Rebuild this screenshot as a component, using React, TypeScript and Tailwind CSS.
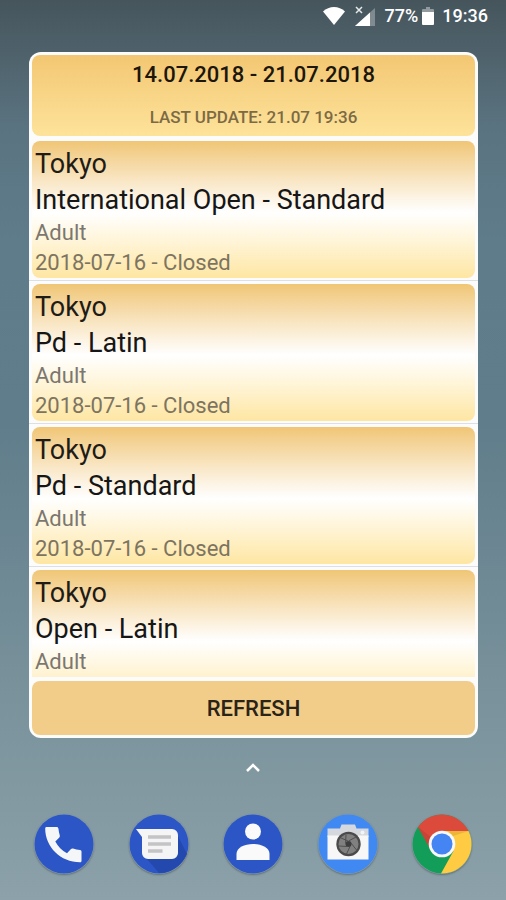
import React from 'react';

interface Competition {
  city: string;
  title: string;
  age: string;
  status: string;
}

const competitions: Competition[] = [
  { city: 'Tokyo', title: 'International Open - Standard', age: 'Adult', status: '2018-07-16 - Closed' },
  { city: 'Tokyo', title: 'Pd - Latin', age: 'Adult', status: '2018-07-16 - Closed' },
  { city: 'Tokyo', title: 'Pd - Standard', age: 'Adult', status: '2018-07-16 - Closed' },
  { city: 'Tokyo', title: 'Open - Latin', age: 'Adult', status: '2018-07-16 - Closed' },
];

const StatusBar: React.FC = () => (
  <header className="flex h-8 shrink-0 items-center justify-end pr-[18px] text-[18px] leading-8 font-medium text-white">
    {/* Wifi */}
    <svg width="22" height="18" viewBox="0 0 22 18" className="mr-[10px]">
      <path d="M11 18 0 4.500C3 1.500 7 0 11 0s8 1.500 11 4.500z" fill="#fff" />
    </svg>
    {/* Mobile signal, no data */}
    <svg width="20" height="21" viewBox="0 0 20 21" className="mr-[10px]">
      <path d="M20 2v18H0z" fill="#fff" opacity="0.3" />
      <path d="M15 6.500V20H0z" fill="#fff" />
      <path d="m1 1 6 6M7 1 1 7" stroke="#e4eaec" strokeWidth="1.500" />
    </svg>
    <span>77%</span>
    {/* Battery */}
    <svg width="12" height="18" viewBox="0 0 12 18" className="mr-2 ml-1">
      <path d="M4 0h4v2h3a1 1 0 0 1 1 1v3H0V3a1 1 0 0 1 1-1h3z" fill="#fff" opacity="0.4" />
      <path d="M0 5h12v12a1 1 0 0 1-1 1H1a1 1 0 0 1-1-1z" fill="#fff" />
    </svg>
    <span>19:36</span>
  </header>
);

const CompetitionItem: React.FC<{ item: Competition }> = ({ item }) => (
  <li className="border-b border-[#dcdfe4] px-[3px] pb-[2px]">
    <div className="rounded-lg bg-linear-to-b from-[#f0c675] via-white via-52% to-[#fee6a2] px-[3px] pt-[5px]">
      <h2 className="text-[27px] leading-9 text-[#1f1b16]">{item.city}</h2>
      <p className="text-[27px] leading-9 text-[#161616]">{item.title}</p>
      <p className="text-[22px] leading-[30px] text-[#7b776f]">{item.age}</p>
      <p className="text-[22px] leading-[30px] text-[#7d7460]">{item.status}</p>
    </div>
  </li>
);

const PhoneIcon: React.FC = () => (
  <svg width="60" height="60" viewBox="0 0 60 60">
    <circle cx="30" cy="30" r="29.500" fill="#2c56c6" />
    <path
      d="M12.500 13h10.200c.9 0 1.500.6 1.700 1.500.3 2.500.7 4.800 1.400 7 .2.800 0 1.400-.5 2l-4 4c2.600 5 6.600 9 11.700 11.700l4-4.100c.5-.5 1.200-.7 2-.5 2.200.7 4.600 1.200 7 1.400.9.100 1.500.7 1.500 1.600V47c0 .9-.7 1.300-1.500 1.300C26.600 48.300 11.200 33 11.200 14.500c0-.9.500-1.500 1.300-1.500z"
      fill="#f5f6f8"
    />
  </svg>
);

const MessagesIcon: React.FC = () => (
  <svg width="60" height="60" viewBox="0 0 60 60">
    <circle cx="30" cy="30" r="29.500" fill="#2c56c6" />
    <path d="M17 44l13 15c11 0 23-7 28-19L47 18z" fill="#2449ae" />
    <path d="M7 15h36a6 6 0 0 1 6 6v18a6 6 0 0 1-6 6H19a6 6 0 0 1-6-6V23z" fill="#f5f5f6" />
    <path d="M19 23h23M19 30h23M19 37h14.500" stroke="#c4c4c6" strokeWidth="3.500" />
  </svg>
);

const ContactsIcon: React.FC = () => (
  <svg width="60" height="60" viewBox="0 0 60 60">
    <circle cx="30" cy="30" r="29.500" fill="#2c56c6" />
    <circle cx="30" cy="17.500" r="8" fill="#fafafa" />
    <path d="M13.500 46V40c0-6.500 8-10 16.500-10s16.500 3.500 16.500 10v6z" fill="#fafafa" />
  </svg>
);

const CameraIcon: React.FC = () => (
  <svg width="60" height="60" viewBox="0 0 60 60">
    <circle cx="30" cy="30" r="29.500" fill="#4088f2" />
    <path d="M22 14.500l1.500-4h13.500l1.500 4h12V23H9.500v-8.500z" fill="#d5d8dc" />
    <path d="M9.500 21.500h41V45.500h-41z" fill="#f7f7f8" />
    <circle cx="44.500" cy="18.500" r="2" fill="#f4f4f4" />
    <circle cx="30.500" cy="30" r="12.200" fill="#4a4a4a" />
    <circle cx="30.500" cy="30" r="10" fill="#808080" />
    <circle cx="30.500" cy="30" r="3" fill="#3d3d3d" />
    <path
      d="M30.500 27 38 23M33 29l5.500 7M32 32.500l-3.500 7.500M29 32.500l-8-.5M27.500 29.500l.5-8.500M30 27l-7-3"
      stroke="#505050"
      strokeWidth="1"
    />
  </svg>
);

const ChromeIcon: React.FC = () => (
  <svg width="60" height="60" viewBox="0 0 60 60">
    <circle cx="30" cy="30" r="29.500" fill="#129d58" />
    <path d="M30 30V17h26.500A29.500 29.500 0 0 1 29 59.500L41.500 37z" fill="#fecb42" />
    <path d="M30 30 18.500 35.500 6 13A29.500 29.500 0 0 1 56.500 17H30z" fill="#dc4a3c" />
    <path d="M6 13l12.500 22L20 24z" fill="#b53b2f" opacity="0.5" />
    <path d="M36 17h20.500L41 22z" fill="#d9a02c" opacity="0.5" />
    <circle cx="30" cy="30" r="13.300" fill="#f8f8f8" />
    <circle cx="30" cy="30" r="10.500" fill="#4584f3" />
  </svg>
);

const apps = [
  { name: 'Phone', Icon: PhoneIcon },
  { name: 'Messages', Icon: MessagesIcon },
  { name: 'Contacts', Icon: ContactsIcon },
  { name: 'Camera', Icon: CameraIcon },
  { name: 'Chrome', Icon: ChromeIcon },
];

const App: React.FC = () => {
  return (
    <div className="flex h-screen flex-col bg-[linear-gradient(to_bottom,#46555c,#5a7380_14%,#5f7c8b_27%,#607d8b_47%,#7d959e_82%,#8ca1a9)] font-[Roboto,sans-serif]">
      <StatusBar />

      {/* Widget */}
      <main className="mt-5 mr-7 ml-[29px] flex min-h-0 flex-1 flex-col overflow-hidden rounded-xl bg-[#fcfcfc] py-[3px]">
        <div className="mx-[3px] h-[81px] shrink-0 rounded-lg bg-linear-to-b from-[#f3c773] to-[#fde39a] text-center">
          <h1 className="pt-1 text-[22px] leading-8 font-medium text-[#1c160c]">14.07.2018 - 21.07.2018</h1>
          <p className="pt-4 text-[17px] leading-5 font-medium text-[#7c6a45]">LAST UPDATE: 21.07 19:36</p>
        </div>

        <ul className="mt-[5px] flex min-h-0 flex-1 flex-col gap-[3px] overflow-y-auto [scrollbar-width:none]">
          {competitions.map((item) => (
            <CompetitionItem key={item.title} item={item} />
          ))}
        </ul>

        <button
          type="button"
          className="mx-[3px] mt-1 h-[54px] shrink-0 rounded-lg bg-[#f1cd89] text-[22px] font-medium text-[#2a2318]"
        >
          REFRESH
        </button>
      </main>

      {/* App drawer handle */}
      <button type="button" aria-label="All apps" className="flex h-[60px] shrink-0 items-center justify-center">
        <svg width="16" height="10" viewBox="0 0 16 10">
          <path d="m2 8 6-6 6 6" fill="none" stroke="#fff" strokeWidth="2.500" />
        </svg>
      </button>

      {/* Dock */}
      <nav className="flex shrink-0 justify-between px-[34px] pt-4 pb-[26px]">
        {apps.map(({ name, Icon }) => (
          <button key={name} type="button" aria-label={name} className="rounded-full shadow-[0_1px_2px_rgba(0,0,0,0.3)]">
            <Icon />
          </button>
        ))}
      </nav>
    </div>
  );
};

export default App;
